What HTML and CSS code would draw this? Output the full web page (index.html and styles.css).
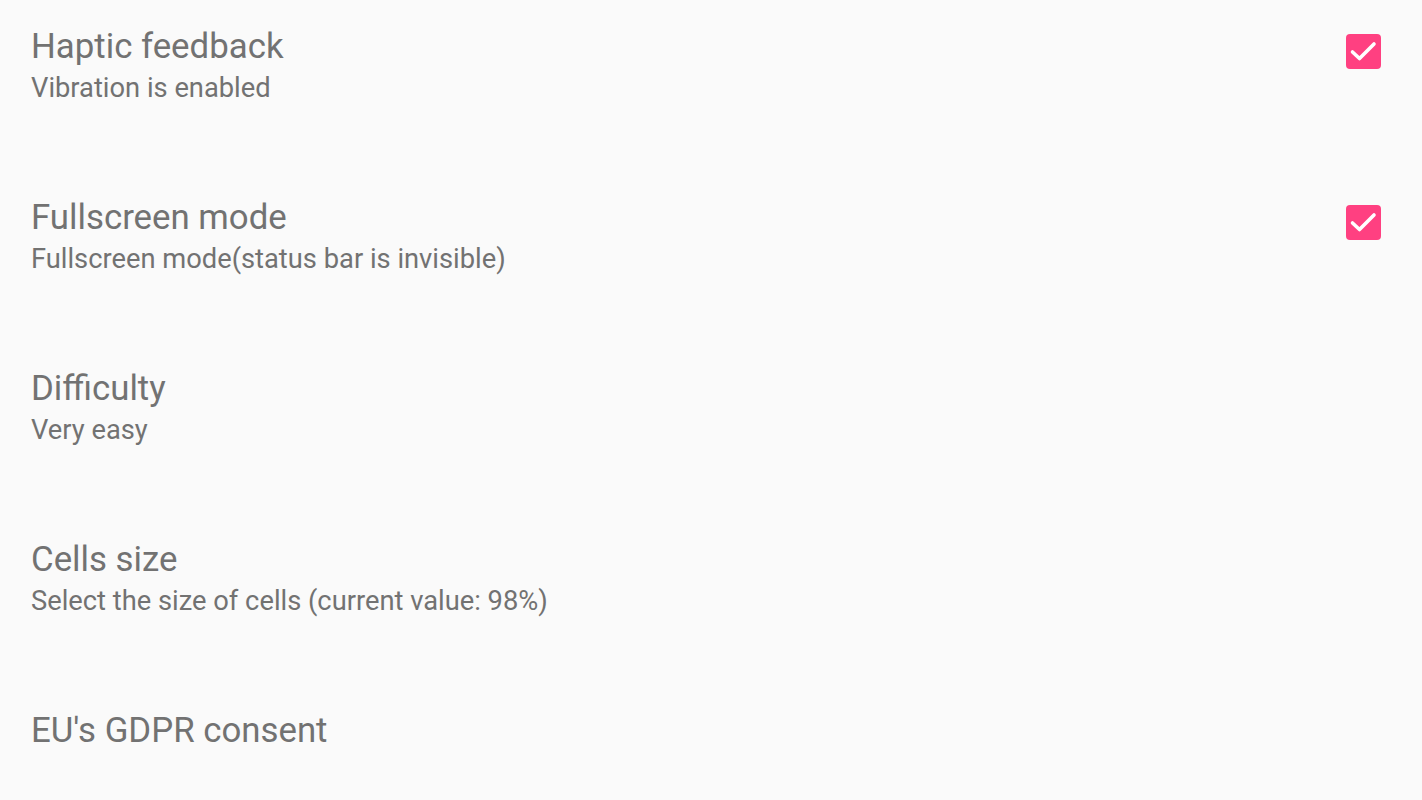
FILE: index.html
```html
<!DOCTYPE html>
<html>
<head>
<meta charset="utf-8">
<link rel="stylesheet" href="styles.css">
</head>
<body>
<div class="list">
  <div class="row">
    <div class="text">
      <div class="title">Haptic feedback</div>
      <div class="summary">Vibration is enabled</div>
    </div>
    <div class="check"><svg viewBox="0 0 35 35" width="35" height="35"><path d="M6.5 18L13.5 24.5L28 10" fill="none" stroke="#fff" stroke-width="3.6" stroke-linecap="round" stroke-linejoin="round"/></svg></div>
  </div>
  <div class="row">
    <div class="text">
      <div class="title">Fullscreen mode</div>
      <div class="summary">Fullscreen mode(status bar is invisible)</div>
    </div>
    <div class="check"><svg viewBox="0 0 35 35" width="35" height="35"><path d="M6.5 18L13.5 24.5L28 10" fill="none" stroke="#fff" stroke-width="3.6" stroke-linecap="round" stroke-linejoin="round"/></svg></div>
  </div>
  <div class="row">
    <div class="text">
      <div class="title">Difficulty</div>
      <div class="summary">Very easy</div>
    </div>
  </div>
  <div class="row">
    <div class="text">
      <div class="title">Cells size</div>
      <div class="summary">Select the size of cells (current value: 98%)</div>
    </div>
  </div>
  <div class="row last">
    <div class="text">
      <div class="title">EU's GDPR consent</div>
    </div>
  </div>
</div>
</body>
</html>
```
FILE: styles.css
```css
html, body {
  margin: 0;
  padding: 0;
  background: #fafafa;
  font-family: Roboto, "Noto Sans", sans-serif;
  overflow: hidden;
}
.list {
  display: flex;
  flex-direction: column;
}
.row {
  height: 171px;
  box-sizing: border-box;
  padding: 25px 41px 0 31px;
  display: flex;
  align-items: flex-start;
  justify-content: space-between;
}
.row.last {
  height: auto;
}
.text {
  display: flex;
  flex-direction: column;
}
.title {
  font-size: 34.8px;
  line-height: 42px;
  color: #727272;
}
.summary {
  font-size: 27.3px;
  line-height: 43px;
  color: #727272;
}
.check {
  width: 35px;
  height: 35px;
  margin-top: 9px;
  border-radius: 4px;
  background: #ff4081;
}
.check svg {
  display: block;
}
```
